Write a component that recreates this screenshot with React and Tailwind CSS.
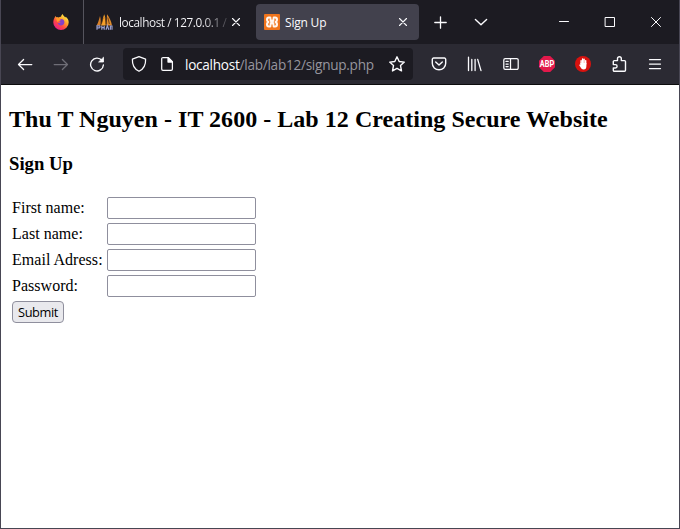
import React from "react";

const Icon = ({ children, className = "text-[#fbfbfe]", size = 16, sw = 1.25 }) => (
  <svg
    width={size}
    height={size}
    viewBox="0 0 16 16"
    fill="none"
    stroke="currentColor"
    strokeWidth={sw}
    strokeLinecap="round"
    strokeLinejoin="round"
    className={`shrink-0 ${className}`}
  >
    {children}
  </svg>
);

const Firefox = () => (
  <svg width="16" height="16" viewBox="0 0 16 16" className="shrink-0">
    <defs>
      <linearGradient id="flame" x1="0.85" y1="0.1" x2="0.2" y2="0.95">
        <stop offset="0" stopColor="#fff04a" />
        <stop offset="0.35" stopColor="#ffa32b" />
        <stop offset="0.65" stopColor="#ff4a41" />
        <stop offset="1" stopColor="#e6198f" />
      </linearGradient>
    </defs>
    <path d="M1.8 3.2 C2 2.6 2.4 2.2 2.7 2 C2.8 2.6 3.1 3.1 3.5 3.4 C4.3 3.3 5 3.4 5.6 3.6 C6.5 2.8 7.2 2.7 8 2.8 C8.3 1.5 9 .6 9.8 .1 C9.9 1.4 11.2 2.4 12.2 3.5 L12.7 2.8 C14.7 4.2 15.7 6.3 15.7 8.6 A7.7 7.4 0 0 1 .3 8.6 C.3 6.5 .8 4.6 1.8 3.2Z" fill="url(#flame)" />
    <path d="M5.2 5.8 C6 5 7.2 4.8 8 5 C10.4 5 11.6 6.7 11.4 8.5 C11.2 10.5 9.6 11.5 8 11.5 C6 11.5 4.7 10 4.6 8.6 C5.6 9.4 7 9.2 7.9 8.3 C6.8 8.1 6.4 7.8 6.4 7.2 L7.8 6.5 C7 5.9 6.1 5.7 5.2 5.8Z" fill="#8541c8" />
    <path d="M2.5 4 C3.7 3.3 5.4 3.5 6.2 4.5 L8 4.6 C8.2 5.5 7.2 5.8 6.4 6.3 C6.2 7 5.2 7.4 4.3 8.2 C3.7 6.5 3.8 5.1 2.5 4Z" fill="#ff9a27" />
  </svg>
);

const PhpMyAdmin = () => (
  <svg width="17" height="16" viewBox="0 0 17 16" className="shrink-0">
    <path d="M.5 11.5 C2 9.5 2.8 6 4 2 C5 5 4.8 9 4.4 11.5Z" fill="#d9812a" />
    <path d="M4.8 11.5 C6.5 7.5 7 3.5 8.2 .2 C9.9 4 10 8 9.6 11.5Z" fill="#f6a02a" />
    <path d="M10.3 11.5 C11 6 10.8 3 11 .2 C13.5 3.5 15.2 7 16 11.5Z" fill="#e08b2b" />
    <path d="M5.3 10.5 L7 4 M10.1 10 L9.2 3 M13.4 10 L11.8 3.5" stroke="#5c3410" strokeWidth=".8" />
    <path d="M1 15.8V11.8H3.4Q4.6 12.9 3.4 13.8H1.6 M5.8 15.8V11.8M5.8 13.6H8.2M8.2 11.8V15.8 M10 15.8L11.4 11.6 12.8 15.8 M14.4 15.8V12H16V15.8" stroke="#9aa0cf" strokeWidth="1.2" fill="none" />
  </svg>
);

const Xampp = () => (
  <svg width="16" height="16" viewBox="0 0 16 16" className="shrink-0">
    <rect width="16" height="16" rx="1" fill="#ef741c" />
    <path d="M4.8 2.5H6Q7.2 2.5 8 3.7Q8.8 2.5 10 2.5H11.2Q14 2.7 14 5.6Q14 7 13.2 8Q14 9 14 10.4Q14 13.3 11.2 13.5H10Q8.8 13.5 8 12.3Q7.2 13.5 6 13.5H4.8Q2 13.3 2 10.4Q2 9 2.8 8Q2 7 2 5.6Q2 2.7 4.8 2.5Z" fill="#fff6ee" />
    <path d="M4.2 5.2Q4.2 4.5 5 4.5H5.6V6.2Q5.6 7.6 6.6 8Q5.6 8.4 5.6 9.8V11.5H5Q4.2 11.5 4.2 10.8V9.8Q4.3 9 5.2 8.9V7.1Q4.3 7 4.2 6.2Z" fill="#ef741c" />
    <path d="M11.8 5.2Q11.8 4.5 11 4.5H10.4V6.2Q10.4 7.6 9.4 8Q10.4 8.4 10.4 9.8V11.5H11Q11.8 11.5 11.8 10.8V9.8Q11.7 9 10.8 8.9V7.1Q11.7 7 11.8 6.2Z" fill="#ef741c" />
    <path d="M8 2V5.4M8 10.6V14" stroke="#ef741c" strokeWidth="1.2" />
  </svg>
);

const TitleBar = () => (
  <div className="flex h-11 shrink-0 bg-[#1c1b22] text-[12px] text-[#fbfbfe]">
    <div className="flex w-[83px] shrink-0 items-center border-r border-[#55545d] pl-[52px]">
      <Firefox />
    </div>
    <div className="flex w-[172px] shrink-0 items-center pl-3">
      <PhpMyAdmin />
      <span className="ml-[6px] w-[110px] bg-linear-to-r from-[#fbfbfe] from-75% to-[#1c1b22] to-105% bg-clip-text pt-0.5 text-[11.8px] tracking-[-0.42px] whitespace-nowrap text-transparent">
        localhost / 127.0.0.1 /
      </span>
      <Icon size={16} sw={1.1} className="ml-[-1px] text-[#fbfbfe]">
        <path d="M4.5 4.5 11.5 11.5M11.5 4.5 4.5 11.5" />
      </Icon>
    </div>
    <div className="mt-1 flex h-9 w-[163px] shrink-0 items-center rounded bg-[#42414d] pr-2 pl-2">
      <Xampp />
      <span className="ml-[5px] flex-1 pt-0.5 tracking-[-0.2px]">Sign Up</span>
      <Icon sw={1.1}>
        <path d="M4.5 4.5 11.5 11.5M11.5 4.5 4.5 11.5" />
      </Icon>
    </div>
    <div className="ml-[13px] flex items-center gap-6">
      <Icon sw={1.3}>
        <path d="M8.5 2.8V14.2M2.8 8.5H14.2" />
      </Icon>
      <Icon sw={1.4} className="ml-px text-[#fbfbfe]">
        <path d="M2.4 5.4 8 10.8 13.6 5.4" />
      </Icon>
    </div>
    <div className="ml-auto flex items-center gap-[30px] pr-[15px]">
      <Icon sw={1}>
        <path d="M3.5 7.5H12.5" />
      </Icon>
      <Icon sw={1}>
        <path d="M3.5 3.5H12.5V12.5H3.5Z" />
      </Icon>
      <Icon sw={1}>
        <path d="M3.5 3.5 12.5 12.5M12.5 3.5 3.5 12.5" />
      </Icon>
    </div>
  </div>
);

const Toolbar = () => (
  <div className="flex h-10 shrink-0 items-center bg-[#2b2a33] pl-4">
    <div className="flex gap-5">
      <Icon>
        <path d="M14.8 8.5H1.6M6.6 3.5 1.5 8.5 6.6 13.5" />
      </Icon>
      <Icon className="text-[#6f6e77]">
        <path d="M1.2 8.5H14.4M9.4 3.5 14.5 8.5 9.4 13.5" />
      </Icon>
      <Icon sw={1.35}>
        <path d="M13 4.5A6.4 6.4 0 1 0 14.4 9" />
        <path d="M14.5 1.6V6H10Z" fill="currentColor" strokeWidth=".8" />
      </Icon>
    </div>
    <div className="ml-[18px] flex h-8 w-[290px] shrink-0 items-center rounded bg-[#1c1b22] pr-2 pl-2">
      <Icon>
        <path d="M8 .7 14.6 3.2C14.9 8.8 12 13.3 8 15.3C4 13.3 1.1 8.8 1.4 3.2Z" />
      </Icon>
      <Icon className="ml-3 text-[#fbfbfe]">
        <path d="M4 1.5H9.2L13.4 5.7V13A1.3 1.3 0 0 1 12.1 14.3H4A1.3 1.3 0 0 1 2.7 13V2.8A1.3 1.3 0 0 1 4 1.5Z" />
        <path d="M9 1.8V6H13.2Z" fill="currentColor" />
      </Icon>
      <span className="ml-[10px] flex-1 pt-0.5 text-[13.6px] tracking-[-0.27px] whitespace-nowrap text-[#96959e]">
        <span className="text-[#fbfbfe]">localhost</span>/lab/lab12/signup.php
      </span>
      <Icon sw={1.4}>
        <path d="M8 .8 10.2 5.5 15.3 6.1 11.5 9.6 12.5 14.9 8 12.3 3.5 14.9 4.5 9.6 .7 6.1 5.8 5.5Z" />
      </Icon>
    </div>
    <div className="ml-[18px] flex gap-5">
      <Icon sw={1.4}>
        <path d="M2.6 2H13.4A1.3 1.3 0 0 1 14.7 3.3V7.3A6.7 6.5 0 0 1 1.3 7.3V3.3A1.3 1.3 0 0 1 2.6 2Z" />
        <path d="M4.7 6 8 9.1 11.3 6" />
      </Icon>
      <Icon sw={1.3}>
        <path d="M1.5 1.2V14.6M4.8 3.4V14.6M8.1 3.4V14.6M10.7 3.4 14 14.6" />
      </Icon>
      <Icon>
        <path d="M2.2 2.6H13.8A1.4 1.4 0 0 1 15.2 4V12A1.4 1.4 0 0 1 13.8 13.4H2.2A1.4 1.4 0 0 1 .8 12V4A1.4 1.4 0 0 1 2.2 2.6ZM7.5 2.6V13.4M3 5.4H5.2M3 8H5.2M3 10.6H5.2" />
      </Icon>
      <svg width="16" height="16" viewBox="0 0 16 16" className="overflow-visible">
        <path d="M4.8 0H11.2L16 4.8V11.2L11.2 16H4.8L0 11.2V4.8Z" fill="#e2194b" />
        <text x="8" y="11" textAnchor="middle" fontFamily="Roboto, sans-serif" fontWeight="700" fontSize="8.4" fill="#fff" textLength="14.4" lengthAdjust="spacingAndGlyphs">
          ABP
        </text>
      </svg>
      <svg width="16" height="16" viewBox="0 0 16 16">
        <circle cx="8" cy="8" r="8" fill="#d8120f" />
        <path d="M6.1 8.2V4.6M7.6 7.5V3M9.1 7.5V3.2M10.7 8V4.6" stroke="#fff" strokeWidth="1.4" strokeLinecap="round" />
        <path d="M5.4 7H11.4V10C11.4 12.4 10.5 13.6 8.6 13.6C6.9 13.6 6.1 12.3 5.4 11L4.1 8.9Q4.7 8.3 5.4 9Z" fill="#fff" />
      </svg>
      <Icon sw={1.4}>
        <path d="M3.3 4.6H6.5V2.6A1.9 1.9 0 0 1 10.3 2.6V4.6H13.5A1 1 0 0 1 14.5 5.6V14.2A1 1 0 0 1 13.5 15.2H3.3A1 1 0 0 1 2.3 14.2V12H4.4A1.7 1.7 0 0 0 4.4 8.6H2.3V5.6A1 1 0 0 1 3.3 4.6Z" />
      </Icon>
      <Icon>
        <path d="M2.5 3.5H13.5M2.5 8H13.5M2.5 12.5H13.5" />
      </Icon>
    </div>
  </div>
);

const fields = [
  ["First name:", "text"],
  ["Last name:", "text"],
  ["Email Adress:", "text"],
  ["Password:", "password"],
];

export default function App() {
  return (
    <div className="flex h-[529px] w-[680px] flex-col overflow-hidden border-r border-b border-l border-[#484653] bg-white font-['Open_Sans',sans-serif]">
      <TitleBar />
      <Toolbar />
      <div className="h-px shrink-0 bg-[#0c0c0d]" />
      <main className="px-2 pt-5 font-['Liberation_Serif',serif] text-black">
        <h1 className="text-[24px] leading-[28px] font-bold tracking-[0.035px] whitespace-nowrap">
          Thu T Nguyen - IT 2600 - Lab 12 Creating Secure Website
        </h1>
        <h2 className="mt-5 text-[18.72px] leading-[22px] font-bold">Sign Up</h2>
        <form className="mt-[22px] ml-[3px] flex flex-col items-start gap-1">
          {fields.map(([label, type]) => (
            <label key={label} className="flex h-[22px] items-center text-[16px] leading-[18px]">
              <span className="w-[95px] tracking-[0.03px] whitespace-nowrap">{label}</span>
              <input type={type} className="h-[22px] w-[149px] rounded-[2px] border border-[#8f8f9d] bg-white px-1" />
            </label>
          ))}
          <button type="button" className="h-[22px] w-[52px] rounded-[4px] border border-[#8f8f9d] bg-[#e9e9ed] font-['Open_Sans',sans-serif] text-[12.8px] leading-[18px] tracking-[-0.4px]">
            Submit
          </button>
        </form>
      </main>
    </div>
  );
}
